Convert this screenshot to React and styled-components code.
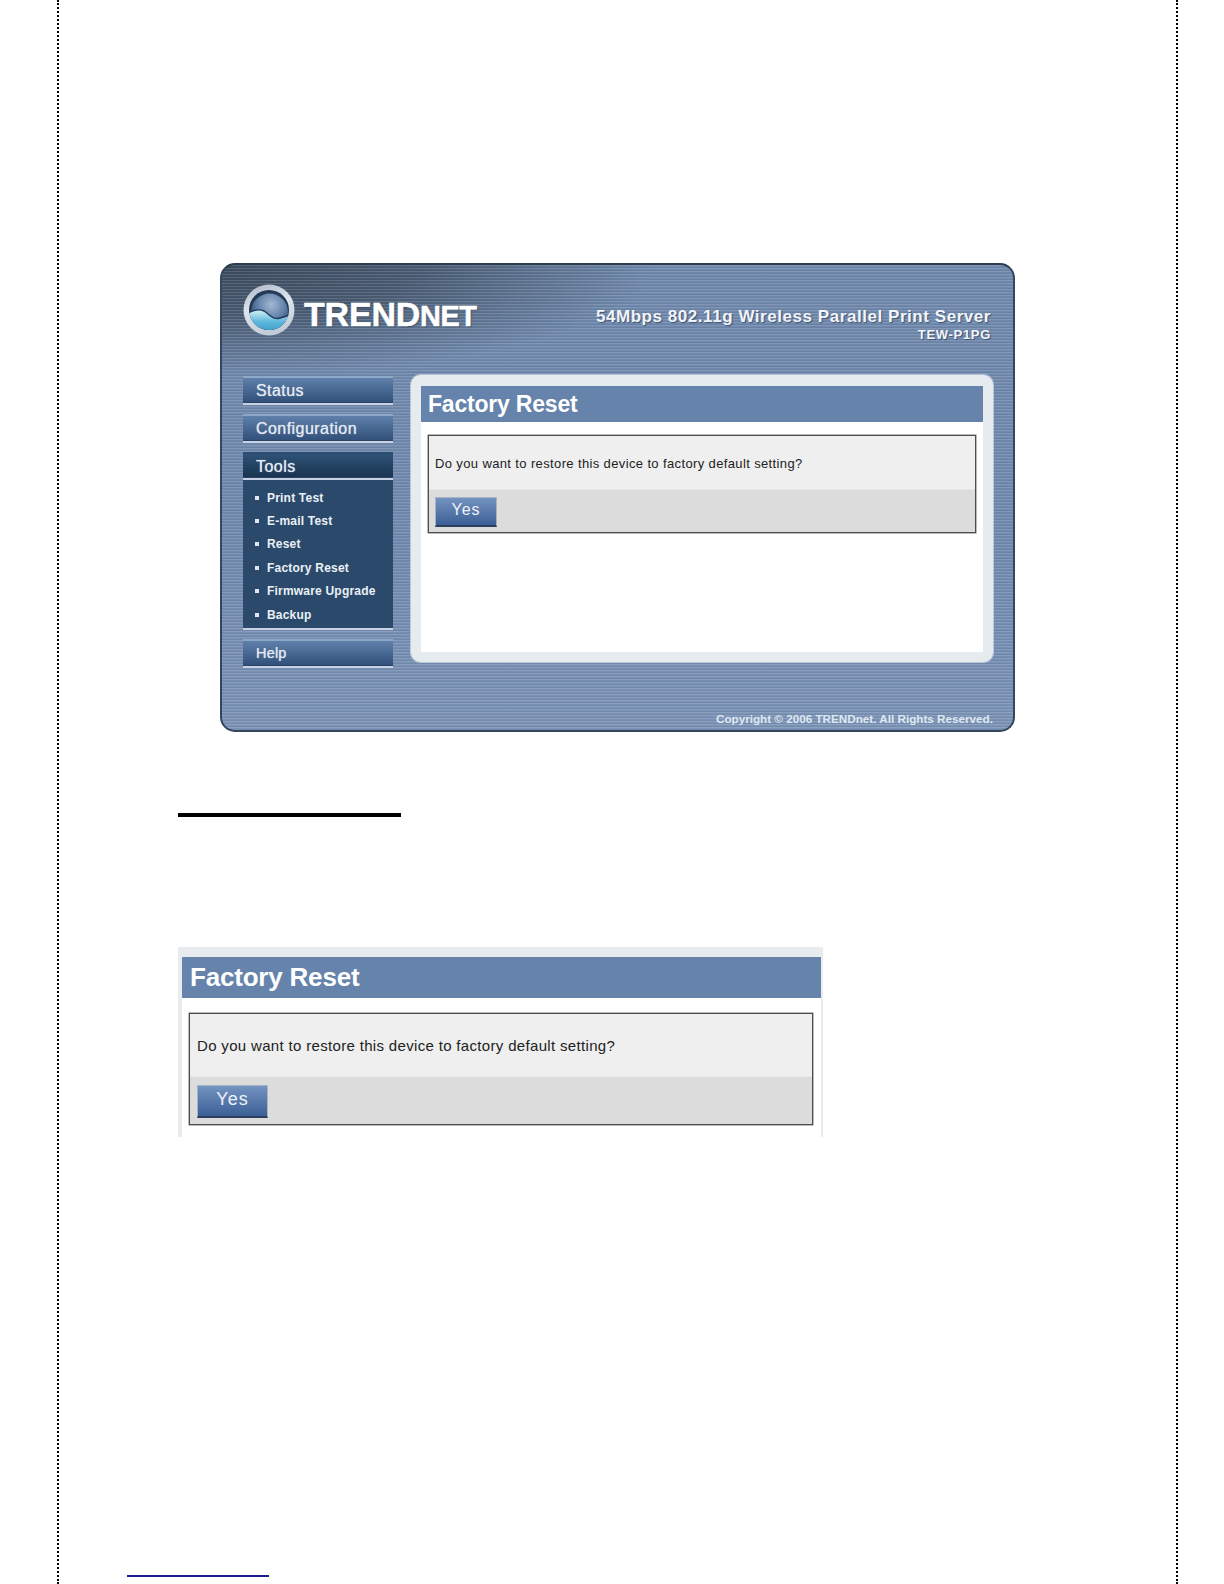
import React from 'react'
import styled, { createGlobalStyle, css } from 'styled-components'

const GlobalStyle = createGlobalStyle`
  body {
    margin: 0;
    background: #fff;
    font-family: "Liberation Sans", Arial, sans-serif;
  }
`

const scanlines = css`
  repeating-linear-gradient(to bottom, rgba(255, 255, 255, 0.13) 0 1px, rgba(255, 255, 255, 0) 1px 2px, rgba(30, 50, 80, 0.08) 2px 3px)
`

const menu = ['Print Test', 'E-mail Test', 'Reset', 'Factory Reset', 'Firmware Upgrade', 'Backup']

const Logo = () => (
  <LogoSvg viewBox="0 0 52 52">
    <defs>
      <linearGradient id="ring" x1="0" y1="0" x2="0.3" y2="1">
        <stop offset="0" stopColor="#aab6c6" />
        <stop offset="0.5" stopColor="#dfe5ec" />
        <stop offset="1" stopColor="#c2ccd8" />
      </linearGradient>
      <radialGradient id="sphere" cx="0.55" cy="0.3" r="0.65">
        <stop offset="0" stopColor="#a3b8d2" />
        <stop offset="0.6" stopColor="#5f7ea6" />
        <stop offset="1" stopColor="#27415f" />
      </radialGradient>
      <linearGradient id="water" x1="0" y1="0" x2="0" y2="1">
        <stop offset="0" stopColor="#d9f0f8" />
        <stop offset="0.45" stopColor="#5db8dc" />
        <stop offset="1" stopColor="#2f90bd" />
      </linearGradient>
      <clipPath id="inner">
        <circle cx="26" cy="26" r="20" />
      </clipPath>
    </defs>
    <circle cx="26" cy="26" r="25.5" fill="url(#ring)" />
    <circle cx="26" cy="26" r="20" fill="#223a55" />
    <g clipPath="url(#inner)">
      <circle cx="26.5" cy="28" r="18.5" fill="url(#sphere)" />
      <path d="M5 29 C11 26 17 25 21 27 C26 30 29 35 35 34.5 C39 34 43 32 47 31 V52 H5 Z" fill="url(#water)" />
      <path d="M5 29 C11 26 17 25 21 27 C26 30 29 35 35 34.5 C39 34 43 32 47 31" fill="none" stroke="#1f3a58" strokeWidth="1.4" />
    </g>
  </LogoSvg>
)

const ResetPanel = ({ big }) => (
  <>
    <TitleBar $big={big}>Factory Reset</TitleBar>
    <FormBox $big={big}>
      <PromptRow $big={big}>Do you want to restore this device to factory default setting?</PromptRow>
      <ActionRow $big={big}>
        <YesButton $big={big}>Yes</YesButton>
      </ActionRow>
    </FormBox>
  </>
)

export default function App() {
  return (
    <>
      <GlobalStyle />
      <Sheet>
        <Window>
          <Header>
            <Brand>
              <Logo />
              <BrandName>TREND<small>NET</small></BrandName>
            </Brand>
            <Product>
              <ProductName>54Mbps 802.11g Wireless Parallel Print Server</ProductName>
              <ProductModel>TEW-P1PG</ProductModel>
            </Product>
          </Header>
          <Body>
            <SideNav>
              <NavButton>Status</NavButton>
              <NavButton>Configuration</NavButton>
              <NavGroup>
                <NavButton $active>Tools</NavButton>
                <SubMenu>
                  {menu.map((item) => (
                    <SubItem key={item}>{item}</SubItem>
                  ))}
                </SubMenu>
              </NavGroup>
              <NavButton $small>Help</NavButton>
            </SideNav>
            <Card>
              <ResetPanel />
            </Card>
          </Body>
          <Footer>Copyright © 2006 TRENDnet. All Rights Reserved.</Footer>
        </Window>

        <SectionRule />

        <CropPanel>
          <ResetPanel big />
        </CropPanel>

        <FootLink />
      </Sheet>
    </>
  )
}

const Sheet = styled.div`
  box-sizing: border-box;
  display: flex;
  flex-direction: column;
  align-items: flex-start;
  width: 1121px;
  height: 1584px;
  margin-left: 57px;
  padding: 263px 0 7px;
  border-left: 2px dotted #000;
  border-right: 2px dotted #000;
`

const Window = styled.div`
  box-sizing: border-box;
  display: flex;
  flex-direction: column;
  width: 795px;
  height: 469px;
  margin-left: 161px;
  border: 2px solid #34475f;
  border-top-color: #2c3c4e;
  border-radius: 15px;
  overflow: hidden;
  background:
    ${scanlines},
    radial-gradient(ellipse 430px 110px at 0 0, #3b4a5c 0%, rgba(59, 74, 92, 0.75) 45%, rgba(59, 74, 92, 0) 100%),
    linear-gradient(to bottom, #6f88ab 0%, #7089ad 60%, #7b93b5 100%);
`

const Header = styled.div`
  display: flex;
  justify-content: space-between;
  height: 110px;
  padding: 0 22px 0 21px;
`

const Brand = styled.div`
  display: flex;
  align-items: center;
  gap: 9px;
  height: 90px;
`

const LogoSvg = styled.svg`
  width: 52px;
  height: 52px;
`

const BrandName = styled.div`
  padding-top: 9px;
  font-size: 34px;
  font-weight: 700;
  letter-spacing: -0.2px;
  color: #fff;
  -webkit-text-stroke: 0.5px #fff;
  text-shadow: 1px 1px 1px #33475f;

  small {
    font-size: 29px;
    letter-spacing: -0.6px;
  }
`

const Product = styled.div`
  display: flex;
  flex-direction: column;
  align-items: flex-end;
  padding-top: 42px;
  color: #f2f5f9;
  font-weight: 700;
  text-shadow: 1px 1px 1px #3b5272;
`

const ProductName = styled.div`
  font-size: 17px;
  line-height: 20px;
  letter-spacing: 0.55px;
`

const ProductModel = styled.div`
  font-size: 13px;
  line-height: 16px;
  letter-spacing: 0.7px;
`

const Body = styled.div`
  display: flex;
  align-items: flex-start;
  gap: 18px;
  height: 293px;
  padding-left: 21px;
`

const SideNav = styled.div`
  display: flex;
  flex-direction: column;
  gap: 9px;
  width: 150px;
  padding-top: 1px;
`

const NavGroup = styled.div`
  display: flex;
  flex-direction: column;
`

const NavButton = styled.div`
  box-sizing: border-box;
  height: ${(p) => (p.$active ? '28px' : '29px')};
  padding-left: 13px;
  font-size: ${(p) => (p.$small ? '14.5px' : '16px')};
  line-height: 25px;
  letter-spacing: ${(p) => (p.$small ? '0.2px' : '0.45px')};
  color: #e4ebf3;
  text-shadow: 0 0 1px #c4d0de;
  border-top: 2px solid ${(p) => (p.$active ? '#2c4c70' : '#8ea8c8')};
  border-bottom: 2px solid #c7d3e4;
  box-shadow: inset 0 -1px 0 #2b4264;
  background: ${(p) =>
    p.$active
      ? 'linear-gradient(to bottom, #2f5276, #17334f)'
      : 'linear-gradient(to bottom, #5f80aa, #2f4f78)'};
`

const SubMenu = styled.ul`
  box-sizing: border-box;
  display: flex;
  flex-direction: column;
  height: 150px;
  margin: 0;
  padding: 6px 0 0 12px;
  list-style: none;
  border-bottom: 2px solid #c7d3e4;
  background: #2b4a6b;
`

const SubItem = styled.li`
  display: flex;
  align-items: center;
  gap: 8px;
  height: 23.4px;
  font-size: 12px;
  font-weight: 700;
  letter-spacing: 0.2px;
  color: #eaf0f6;

  &::before {
    content: '';
    width: 4px;
    height: 4px;
    background: #dfe7f0;
  }
`

const Card = styled.div`
  box-sizing: border-box;
  width: 582px;
  height: 287px;
  border: solid #e6ebef;
  border-width: 11px 10px 10px;
  border-radius: 10px;
  background: #fff;
  box-shadow: 0 0 0 1px rgba(255, 255, 255, 0.5);
`

const Footer = styled.div`
  display: flex;
  flex: 1;
  align-items: flex-end;
  justify-content: flex-end;
  padding: 0 20px 3px 0;
  font-size: 11.7px;
  font-weight: 700;
  line-height: 16px;
  color: #dfe8f2;
`

const TitleBar = styled.div`
  box-sizing: border-box;
  height: ${(p) => (p.$big ? '41px' : '36px')};
  padding-left: ${(p) => (p.$big ? '8px' : '7px')};
  font-size: ${(p) => (p.$big ? '26px' : '23px')};
  font-weight: 700;
  letter-spacing: -0.2px;
  line-height: ${(p) => (p.$big ? '41px' : '36px')};
  color: #fff;
  background: #6583ab;
`

const FormBox = styled.div`
  box-sizing: border-box;
  display: flex;
  flex-direction: column;
  height: ${(p) => (p.$big ? '112px' : '98px')};
  margin: ${(p) => (p.$big ? '15px 8px 11px 7px' : '13px 7px 0')};
  border: 1px solid #4c4c4c;
  box-shadow: 0 0 0 0.5px #777;
`

const PromptRow = styled.div`
  box-sizing: border-box;
  display: flex;
  align-items: center;
  height: ${(p) => (p.$big ? '62px' : '53px')};
  padding-left: ${(p) => (p.$big ? '7px' : '6px')};
  padding-top: ${(p) => (p.$big ? '0' : '2px')};
  font-size: ${(p) => (p.$big ? '15px' : '13px')};
  letter-spacing: ${(p) => (p.$big ? '0.33px' : '0.37px')};
  color: #222;
  background: #efefef;
`

const ActionRow = styled.div`
  flex: 1;
  padding: ${(p) => (p.$big ? '8px 0 0 7px' : '7px 0 0 6px')};
  background: #dcdcdc;
  border-top: 1px solid #e8e8e8;
`

const YesButton = styled.button`
  box-sizing: border-box;
  display: block;
  width: ${(p) => (p.$big ? '71px' : '62px')};
  height: ${(p) => (p.$big ? '33px' : '30px')};
  padding: 0 0 3px;
  font-family: "Liberation Sans", Arial, sans-serif;
  font-size: ${(p) => (p.$big ? '18px' : '16px')};
  letter-spacing: 1px;
  color: #eef3f9;
  border: 1px solid #a9b4c2;
  border-bottom: 2px solid #2b3f5c;
  background: linear-gradient(to bottom, #7393c0, #3c5f96);
`

const SectionRule = styled.div`
  width: 223px;
  height: 4px;
  margin: 81px 0 0 119px;
  background: #000;
`

const CropPanel = styled.div`
  box-sizing: border-box;
  width: 645px;
  height: 190px;
  margin: 130px 0 0 119px;
  border: solid #e8ecef;
  border-width: 10px 2px 0 4px;
  background: #fff;
`

const FootLink = styled.div`
  width: 142px;
  height: 0;
  margin: auto 0 0 68px;
  border-top: 2px solid #1c1c8e;
`
